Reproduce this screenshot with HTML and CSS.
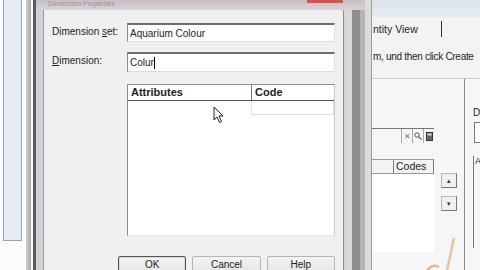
FILE: index.html
```html
<!DOCTYPE html>
<html>
<head>
	<title>Dimension Properties</title>
	<link rel="stylesheet" href="styles.css">
</head>
<body>
	<div class="desk">
		<div class="win-left">
			<div class="left-pane"></div>
			<div class="left-edge"></div>
		</div>

		<div class="dialog">
			<div class="dlg-title">
				<span class="dlg-caption">Dimension Properties</span>
				<span class="dlg-close"></span>
			</div>
			<div class="dlg-body">
				<div class="field-row">
					<label>Dimension <u>s</u>et:</label>
					<div class="textbox">Aquarium Colour</div>
				</div>
				<div class="field-row second">
					<label><u>D</u>imension:</label>
					<div class="textbox">Colur<span class="caret"></span></div>
				</div>
				<div class="grid">
					<div class="grid-head">
						<div class="col-attr">Attributes</div>
						<div class="col-code">Code</div>
					</div>
					<div class="grid-row">
						<div class="col-attr"></div>
						<div class="col-code"></div>
					</div>
				</div>
				<div class="buttons">
					<button class="btn default">OK</button>
					<button class="btn">Cancel</button>
					<button class="btn">Help</button>
				</div>
			</div>
		</div>

		<div class="win-right">
			<div class="right-frame"></div>
			<div class="right-main">
				<div class="right-top"></div>
				<div class="tab-strip">
					<span class="tab-label">ntity View</span>
					<span class="tab-edge"></span>
				</div>
				<div class="hint"><span>m, und then click Create</span></div>
				<div class="right-content">
					<div class="list-col">
						<div class="search">
							<span class="search-box"></span>
							<span class="tool">&#x2715;</span>
							<span class="tool">
								<svg width="8" height="8" viewBox="0 0 8 8"><circle cx="3" cy="3" r="2.2" fill="none" stroke="#555" stroke-width="1"/><path d="M4.6 4.6 L7.5 7.5" stroke="#555" stroke-width="1.2"/></svg>
							</span>
							<span class="tool">
								<svg width="7" height="9" viewBox="0 0 7 9"><rect x="0.5" y="0.5" width="6" height="8" fill="#666" stroke="#333"/><rect x="1.5" y="1.5" width="4" height="2" fill="#ddd"/></svg>
							</span>
						</div>
						<div class="code-list">
							<div class="code-head">
								<span class="ch-blank"></span>
								<span class="ch-codes">Codes</span>
							</div>
							<div class="code-body"></div>
						</div>
					</div>
					<div class="scroll-col">
						<span class="arrow-btn">&#x25B4;</span>
						<span class="arrow-btn">&#x25BE;</span>
					</div>
					<div class="side-col">
						<span class="side-label">D</span>
						<span class="side-box"></span>
						<span class="side-head">A</span>
					</div>
				</div>
			</div>
		</div>
	</div>

	<svg class="cursor" width="12" height="18" viewBox="0 0 12 18">
		<path d="M1 1 L1 14 L4 11 L6.5 16.5 L8.5 15.5 L6 10 L10 10 Z" fill="#fff" stroke="#222" stroke-width="1"/>
	</svg>
	<svg class="stroke" width="60" height="40" viewBox="0 0 60 40">
		<path d="M34 6 L27 38" stroke="#e6c49a" stroke-width="2.5" fill="none"/>
		<path d="M6 40 Q12 31 19 35" stroke="#e8b98a" stroke-width="2.5" fill="none"/>
	</svg>
</body>
</html>
```

FILE: styles.css
```css
body {
	margin: 0;
	padding: 0;
	width: 480px;
	height: 270px;
	overflow: hidden;
	font-family: "Liberation Sans", Arial, sans-serif;
	font-size: 10px;
	color: #1e1e1e;
	background-color: #f0f0f0;
	position: relative;
}
.desk {
	display: flex;
	width: 480px;
	height: 270px;
	overflow: hidden;
}

/* window behind, left */
.win-left {
	width: 33px;
	flex-shrink: 0;
	display: flex;
	background-color: #fbfbfb;
}
.left-pane {
	width: 17px;
	height: 240px;
	margin-left: 3px;
	background-color: #e4ebf2;
	border: 1px solid #9aa3ad;
	border-top: none;
}
.left-edge {
	width: 5px;
	margin-left: 4px;
	background: linear-gradient(to right, #cfcfcf, #a4a4a4);
}

/* dialog */
.dialog {
	width: 332px;
	flex-shrink: 0;
	display: flex;
	flex-direction: column;
	border-left: 3px solid #5a5a5a;
	background: linear-gradient(to right, #d2d3d6 0 309px, #d9d9d9 309px 316px, #8f8f8f 316px 324px, #b4b4b4 324px);
	box-sizing: border-box;
	overflow: hidden;
}
.dlg-title {
	height: 10px;
	flex-shrink: 0;
	background: linear-gradient(to bottom, #c9bfc7, #d9d3d8);
	position: relative;
}
.dlg-caption {
	display: block;
	font-size: 7px;
	line-height: 8px;
	margin-left: 12px;
	color: #9a8f98;
}
.dlg-close {
	position: absolute;
	left: 271px;
	top: 0;
	width: 36px;
	height: 3px;
	background-color: #c65b55;
}
.dlg-body {
	width: 283px;
	height: 260px;
	flex-shrink: 0;
	margin-left: 7px;
	background-color: #f0f0f0;
	border-left: 1px solid #9b9b9b;
	border-right: 1px solid #8f8f8f;
	padding: 13px 8px 0 8px;
	display: flex;
	flex-direction: column;
	box-sizing: content-box;
	overflow: hidden;
}
.dlg-body > * {
	flex-shrink: 0;
}
.field-row {
	display: flex;
	align-items: center;
	height: 19px;
}
.field-row.second {
	margin-top: 10px;
	height: 20px;
}
.field-row label {
	width: 75px;
	margin-top: -3px;
}
.textbox {
	flex: 1;
	height: 100%;
	box-sizing: border-box;
	background-color: #fff;
	border-top: 2px solid #6e6e6e;
	border-left: 1px solid #8a8a8a;
	border-bottom: 1px solid #dcdcdc;
	border-right: 1px solid #e4e4e4;
	padding-left: 2px;
	display: flex;
	align-items: center;
}
.caret {
	width: 1px;
	height: 12px;
	background-color: #000;
}

/* grid */
.grid {
	margin-top: 12px;
	margin-left: 75px;
	height: 152px;
	background-color: #fff;
	border: 1px solid #8a8a8a;
	border-right-color: #c8c8c8;
	border-bottom-color: #e8e8e8;
	box-sizing: border-box;
}
.grid-head {
	display: flex;
	height: 16px;
	border-bottom: 1px solid #555;
	box-sizing: border-box;
	font-weight: bold;
	font-size: 11px;
	line-height: 15px;
}
.grid-head div,
.grid-row div {
	box-sizing: border-box;
}
.col-attr {
	width: 123px;
	padding-left: 3px;
}
.col-code {
	flex: 1;
	padding-left: 3px;
	border-left: 1px solid #777;
}
.grid-row {
	display: flex;
	height: 14px;
}
.grid-row .col-code {
	border: 1px solid #e2e2e2;
	border-top: none;
}

/* buttons */
.buttons {
	display: flex;
	gap: 6px;
	margin-top: 20px;
	margin-left: 66px;
}
.btn {
	width: 69px;
	height: 20px;
	font-family: "Liberation Sans", Arial, sans-serif;
	font-size: 10px;
	color: #222;
	background: linear-gradient(to bottom, #f4f4f4, #e2e2e2);
	border: 1px solid #b4b4b4;
	border-radius: 2px;
	padding: 0 0 4px 0;
}
.btn.default {
	border: 1px solid #555;
	box-shadow: inset 0 0 0 1px #d8d8d8;
}

/* window behind, right */
.win-right {
	width: 115px;
	flex-shrink: 0;
	display: flex;
	overflow: hidden;
}
.right-frame {
	width: 6px;
	flex-shrink: 0;
	background-color: #dcdcdc;
	border-right: 1px solid #9a9a9a;
}
.right-main {
	width: 108px;
	flex-shrink: 0;
	display: flex;
	flex-direction: column;
	background-color: #f3f3f3;
	overflow: hidden;
}
.right-top {
	height: 20px;
	background: linear-gradient(to bottom, #dbe2ea, #e6ebf0);
}
.tab-strip {
	height: 28px;
	display: flex;
	align-items: center;
	font-size: 10.5px;
}
.tab-label {
	margin-left: 1px;
	white-space: nowrap;
}
.tab-edge {
	width: 1px;
	height: 16px;
	margin-left: 23px;
	background-color: #333;
}
.hint {
	height: 43px;
	line-height: 14px;
	padding: 9px 0 0 1px;
	box-sizing: border-box;
	overflow: hidden;
	white-space: nowrap;
	font-size: 10px;
	letter-spacing: -0.3px;
	border-bottom: 1px solid #c9c9c9;
}
.right-content {
	flex: 1;
	display: flex;
	background-color: #f6f6f6;
}
.list-col {
	width: 62px;
	display: flex;
	flex-direction: column;
}
.search {
	margin-top: 49px;
	height: 15px;
	display: flex;
	justify-content: flex-end;
	border-top: 1px solid #777;
}
.search-box {
	flex: 1;
}
.tool {
	width: 10px;
	height: 14px;
	display: flex;
	align-items: center;
	justify-content: center;
	border-left: 1px solid #aaa;
	font-size: 8px;
	color: #777;
}
.code-list {
	margin-top: 15px;
	display: flex;
	flex-direction: column;
	height: 93px;
}
.code-head {
	display: flex;
	height: 13px;
	border-top: 1px solid #999;
	border-bottom: 1px solid #999;
	background-color: #f3f3f3;
}
.ch-blank {
	width: 21px;
}
.ch-codes {
	flex: 1;
	border-left: 1px solid #777;
	border-right: 1px solid #777;
	padding-left: 2px;
	font-size: 10.5px;
	line-height: 13px;
}
.code-body {
	flex: 1;
	background-color: #fff;
}
.scroll-col {
	width: 16px;
	margin-left: 7px;
	display: flex;
	flex-direction: column;
	gap: 8px;
	padding-top: 94px;
}
.arrow-btn {
	width: 14px;
	height: 13px;
	font-size: 7px;
	line-height: 13px;
	text-align: center;
	color: #333;
	background-color: #f0f0f0;
	border: 1px solid #b8b8b8;
	border-right-color: #777;
	border-bottom-color: #777;
}
.side-col {
	flex: 1;
	margin-left: 7px;
	border-left: 1px solid #8a8a8a;
	display: flex;
	flex-direction: column;
	align-items: flex-end;
	padding-top: 28px;
	gap: 3px;
	height: 163px;
}
.side-label {
	width: 7px;
}
.side-box {
	width: 5px;
	height: 19px;
	margin-top: 1px;
	border: 1px solid #777;
	border-right: none;
	background-color: #fff;
}
.side-head {
	width: 7px;
	height: 92px;
	margin-top: 10px;
	border-left: 1px solid #777;
	box-sizing: border-box;
	font-size: 9px;
	line-height: 11px;
	padding-left: 1px;
}

/* overlays */
.cursor {
	position: absolute;
	left: 213px;
	top: 106px;
}
.stroke {
	position: absolute;
	left: 420px;
	top: 232px;
}
```
